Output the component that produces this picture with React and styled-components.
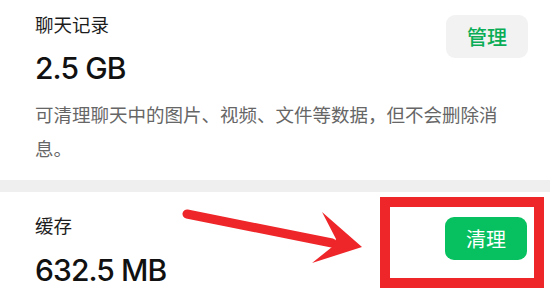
import React from 'react';
import styled, { createGlobalStyle } from 'styled-components';

const GlobalStyle = createGlobalStyle`
  html, body {
    margin: 0;
    padding: 0;
    background: #fff;
  }
  body {
    font-family: Roboto, "Noto Sans CJK SC", sans-serif;
    width: 550px;
    height: 300px;
    overflow: hidden;
  }
`;

const Page = styled.div`
  position: relative;
  width: 550px;
  height: 300px;
  overflow: hidden;
  background: #fff;
`;

const Section = styled.section`
  position: relative;
  padding: ${(p) => p.$pad};
`;

const HeaderRow = styled.div`
  display: flex;
  justify-content: space-between;
  align-items: flex-start;
`;

const Info = styled.div`
  display: flex;
  flex-direction: column;
  gap: ${(p) => p.$gap}px;
`;

const Title = styled.div`
  font-size: 18.5px;
  line-height: 22px;
  color: #1c1c1c;
`;

const Size = styled.div`
  font-family: Inter, Roboto, sans-serif;
  font-size: 30px;
  line-height: 36px;
  font-weight: 500;
  letter-spacing: -0.9px;
  color: #111;
`;

const Desc = styled.p`
  margin: 14px 23px 0 0;
  font-size: 18.5px;
  line-height: 33.5px;
  color: #666;
`;

const Button = styled.button`
  width: 82px;
  height: 43px;
  padding: 0;
  border: none;
  border-radius: 9px;
  font-family: "Noto Sans CJK SC", sans-serif;
  font-size: 20px;
  font-weight: ${(p) => (p.$primary ? 400 : 500)};
  background: ${(p) => (p.$primary ? '#07c160' : '#f2f2f2')};
  color: ${(p) => (p.$primary ? '#fff' : '#0aad55')};
  margin-top: ${(p) => p.$offset || 0}px;
`;

const Divider = styled.div`
  height: 12px;
  background: #efefef;
`;

const Highlight = styled.div`
  position: absolute;
  left: 380px;
  top: 5px;
  width: 164px;
  height: 91px;
  box-sizing: border-box;
  border: 10px solid #ee2629;
`;

const Arrow = styled.svg`
  position: absolute;
  left: 180px;
  top: 200px;
`;

export default function App() {
  return (
    <Page>
      <GlobalStyle />
      <Section $pad="15px 22px 13px 35px">
        <HeaderRow>
          <Info $gap={13}>
            <Title>聊天记录</Title>
            <Size>2.5 GB</Size>
          </Info>
          <Button>管理</Button>
        </HeaderRow>
        <Desc>可清理聊天中的图片、视频、文件等数据，但不会删除消息。</Desc>
      </Section>
      <Divider />
      <Section $pad="24px 23px 0 35px">
        <HeaderRow>
          <Info $gap={14}>
            <Title>缓存</Title>
            <Size>632.5 MB</Size>
          </Info>
          <Button $primary $offset={1}>清理</Button>
        </HeaderRow>
        <Highlight />
      </Section>
      <Arrow width="190" height="70" viewBox="0 0 190 70">
        <line x1="7" y1="14" x2="152" y2="43" stroke="#ee2629" strokeWidth="9" strokeLinecap="round" />
        <polygon points="142,12 182,47 132,63 152,47 156,39" fill="#ee2629" />
      </Arrow>
    </Page>
  );
}
